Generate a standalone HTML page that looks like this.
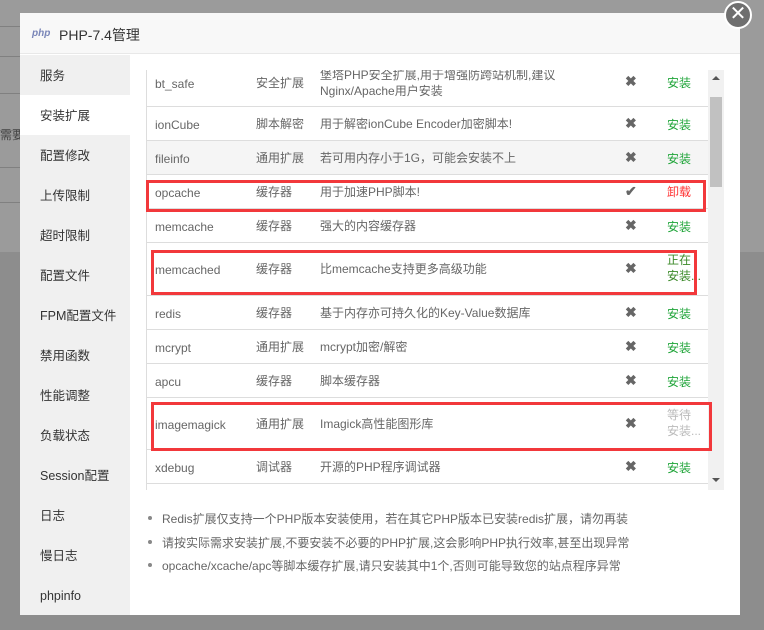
<!DOCTYPE html><html><head><meta charset="utf-8"><style>
*{margin:0;padding:0;box-sizing:border-box}
body{width:764px;height:630px;overflow:hidden;position:relative;font-family:"Liberation Sans","Noto Sans CJK SC",sans-serif;background:#8d8d8d}
.bgtop{position:absolute;left:0;top:0;width:764px;height:252px;background:#9b9b9b}
.ln{position:absolute;left:0;width:20px;height:1px;background:#808080}
.modal{position:absolute;left:20px;top:13px;width:720px;height:602px;background:#fff}
.hd{height:41px;background:#f8f8f8;border-bottom:1px solid #e8e8e8;position:relative}
.hd .logo{position:absolute;left:12px;top:15px;font:italic bold 10px "Liberation Sans",sans-serif;color:#7a86b8}
.hd .t{position:absolute;left:39px;top:12px;font-size:14px;color:#333}
.side{position:absolute;left:0;top:42px;width:110px;height:560px;background:#f0f0f0}
.side div{height:40px;line-height:42px;padding-left:20px;font-size:12.5px;color:#333}
.side .on{background:#fff}
.tbl{position:absolute;left:126px;top:57px;width:562px;height:420px;overflow:hidden;border-left:1px solid #ddd}
.row{position:absolute;left:0;width:562px;border-bottom:1px solid #ddd;font-size:12px;color:#666}
.row span{position:absolute;line-height:16px}
.c1{left:8px;margin-top:1px}.c2{left:109px}.c3{left:173px}.c4{left:478px;color:#666;font-size:14px;font-weight:bold}.c5{left:520px;color:#20a53a}
.red{position:absolute;border:3px solid #f2383b}
.sb{position:absolute;left:688px;top:57px;width:16px;height:420px;background:#f1f1f1}
.thumb{position:absolute;left:2px;top:27px;width:12px;height:90px;background:#c1c1c1}
.notes{position:absolute;left:126px;top:497px;font-size:12px;color:#666}
.notes div{height:23.5px;position:relative;padding-left:16px}
.notes div:before{content:"";position:absolute;left:2px;top:6px;width:4px;height:4px;border-radius:2px;background:#888}
.close{position:absolute;left:724px;top:1px;width:28px;height:28px;border-radius:14px;background:#6f6f6f;border:2px solid #fff;color:#fff;font-size:20px;line-height:22px;text-align:center}
</style></head><body>
<div class="bgtop"></div>
<div class="ln" style="top:26px"></div><div class="ln" style="top:56px"></div><div class="ln" style="top:93px"></div><div class="ln" style="top:130px"></div><div class="ln" style="top:167px"></div><div class="ln" style="top:202px"></div>
<div style="position:absolute;left:0;top:126px;font-size:12px;color:#444">需要</div>
<div class="modal">
<div class="hd"><span class="logo">php</span><span class="t">PHP-7.4管理</span></div>
<div class="side"><div>服务</div><div class="on">安装扩展</div><div>配置修改</div><div>上传限制</div><div>超时限制</div><div>配置文件</div><div>FPM配置文件</div><div>禁用函数</div><div>性能调整</div><div>负载状态</div><div>Session配置</div><div>日志</div><div>慢日志</div><div>phpinfo</div></div>
<div class="tbl">
<div class="row" style="top:-6px;height:43px"><span class="c1" style="top:11px">bt_safe</span><span class="c2" style="top:11px">安全扩展</span><span class="c3" style="top:3px">堡塔PHP安全扩展,用于增强防跨站机制,建议<br>Nginx/Apache用户安装</span><span class="c4" style="top:9px">✖</span><span class="c5" style="top:11px">安装</span></div>
<div class="row" style="top:37px;height:34px"><span class="c1" style="top:9px">ionCube</span><span class="c2" style="top:9px">脚本解密</span><span class="c3" style="top:9px">用于解密ionCube Encoder加密脚本!</span><span class="c4" style="top:8px">✖</span><span class="c5" style="top:10px">安装</span></div>
<div class="row" style="top:71px;height:34px;background:#f5f5f5"><span class="c1" style="top:9px">fileinfo</span><span class="c2" style="top:9px">通用扩展</span><span class="c3" style="top:9px">若可用内存小于1G，可能会安装不上</span><span class="c4" style="top:8px">✖</span><span class="c5" style="top:10px">安装</span></div>
<div class="row" style="top:105px;height:34px"><span class="c1" style="top:9px">opcache</span><span class="c2" style="top:9px">缓存器</span><span class="c3" style="top:9px">用于加速PHP脚本!</span><span class="c4" style="top:8px">✔</span><span class="c5" style="top:9px;color:#f33">卸载</span></div>
<div class="row" style="top:139px;height:34px"><span class="c1" style="top:9px">memcache</span><span class="c2" style="top:9px">缓存器</span><span class="c3" style="top:9px">强大的内容缓存器</span><span class="c4" style="top:8px">✖</span><span class="c5" style="top:10px">安装</span></div>
<div class="row" style="top:173px;height:53px"><span class="c1" style="top:18px">memcached</span><span class="c2" style="top:18px">缓存器</span><span class="c3" style="top:18px">比memcache支持更多高级功能</span><span class="c4" style="top:17px">✖</span><span class="c5" style="top:9px;color:#3c8a2a">正在<br>安装...</span></div>
<div class="row" style="top:226px;height:34px"><span class="c1" style="top:9px">redis</span><span class="c2" style="top:9px">缓存器</span><span class="c3" style="top:9px">基于内存亦可持久化的Key-Value数据库</span><span class="c4" style="top:8px">✖</span><span class="c5" style="top:10px">安装</span></div>
<div class="row" style="top:260px;height:34px"><span class="c1" style="top:9px">mcrypt</span><span class="c2" style="top:9px">通用扩展</span><span class="c3" style="top:9px">mcrypt加密/解密</span><span class="c4" style="top:8px">✖</span><span class="c5" style="top:10px">安装</span></div>
<div class="row" style="top:294px;height:34px"><span class="c1" style="top:9px">apcu</span><span class="c2" style="top:9px">缓存器</span><span class="c3" style="top:9px">脚本缓存器</span><span class="c4" style="top:8px">✖</span><span class="c5" style="top:10px">安装</span></div>
<div class="row" style="top:328px;height:52px"><span class="c1" style="top:18px">imagemagick</span><span class="c2" style="top:18px">通用扩展</span><span class="c3" style="top:18px">Imagick高性能图形库</span><span class="c4" style="top:17px">✖</span><span class="c5" style="top:9px;color:#bbb">等待<br>安装...</span></div>
<div class="row" style="top:380px;height:34px"><span class="c1" style="top:9px">xdebug</span><span class="c2" style="top:9px">调试器</span><span class="c3" style="top:9px">开源的PHP程序调试器</span><span class="c4" style="top:8px">✖</span><span class="c5" style="top:10px">安装</span></div>
</div>
<div class="sb"><div style="position:absolute;left:4px;top:6px;border:4px solid transparent;border-bottom:4px solid #555;border-top:0"></div><div class="thumb"></div><div style="position:absolute;left:4px;top:408px;border:4px solid transparent;border-top:4px solid #555;border-bottom:0"></div></div>
<div class="red" style="left:126px;top:167px;width:560px;height:32px"></div>
<div class="red" style="left:131px;top:237px;width:546px;height:45px"></div>
<div class="red" style="left:131px;top:389px;width:561px;height:49px"></div>
<div class="notes"><div>Redis扩展仅支持一个PHP版本安装使用，若在其它PHP版本已安装redis扩展，请勿再装</div><div>请按实际需求安装扩展,不要安装不必要的PHP扩展,这会影响PHP执行效率,甚至出现异常</div><div>opcache/xcache/apc等脚本缓存扩展,请只安装其中1个,否则可能导致您的站点程序异常</div></div>
</div>
<div class="close">✕</div>
</body></html>
